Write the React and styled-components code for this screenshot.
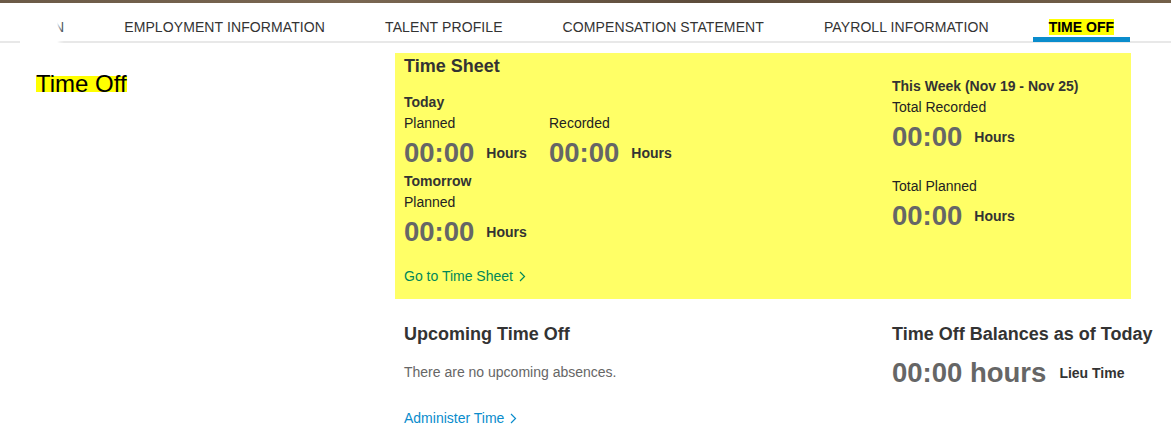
import React from 'react';
import styled, { createGlobalStyle } from 'styled-components';

const GlobalStyle = createGlobalStyle`
  html, body {
    margin: 0;
    padding: 0;
    background: #fff;
    font-family: "Liberation Sans", Arial, sans-serif;
    color: #333;
  }
`;

const HeaderStrip = styled.div`
  height: 3px;
  background: linear-gradient(to right, #6b5a47, #7a6752 30%, #5d4c3b 60%, #736049);
`;

const NavWrap = styled.nav`
  position: relative;
  height: 40px;
`;

const NavScroller = styled.div`
  height: 40px;
  overflow: hidden;
  box-shadow: inset 0 -2px 0 #e8e8e8;
`;

const TabList = styled.ul`
  display: flex;
  justify-content: flex-end;
  gap: 28px;
  width: 1130px;
  margin: 0;
  padding: 0;
  list-style: none;
  white-space: nowrap;
`;

const Tab = styled.li`
  flex: none;
  box-sizing: border-box;
  height: 39px;
  padding: 15px 16px 0;
  font-size: 14px;
  line-height: 19px;
  letter-spacing: ${p => (p.$active ? 0 : 0.1)}px;
  color: ${p => (p.$active ? '#000' : '#333')};
  font-weight: ${p => (p.$active ? 700 : 400)};
  border-bottom: 5px solid ${p => (p.$active ? '#0a8ccc' : 'transparent')};
`;

const Mark = styled.span`
  background: #ffff00;
  line-height: 16px;
  display: inline-block;
`;

/* white fade that hides the tabs scrolled off to the left */
const ScrollFade = styled.div`
  position: absolute;
  top: 0;
  left: 0;
  width: 64px;
  height: 40px;
  background:
    linear-gradient(#e8e8e8, #e8e8e8) left bottom / 20px 2px no-repeat,
    linear-gradient(to right, #fff 0, #fff 57px, rgba(255, 255, 255, 0.45) 60px, rgba(255, 255, 255, 0) 64px);
`;

const Page = styled.div`
  display: grid;
  grid-template-columns: 395px 736px;
`;

const Side = styled.div`
  padding: 27px 0 0 36px;
`;

const PageTitle = styled.h1`
  margin: 0;
  font-size: 24px;
  font-weight: 400;
  line-height: 28px;
  color: #000;
`;

const Main = styled.div`
  padding-top: 10px;
`;

const Card = styled.section`
  display: grid;
  grid-template-columns: 488px 1fr;
  padding: 0 9px 12px;
  background: #ffff66;
  white-space: nowrap;
`;

const Column = styled.div`
  padding-top: ${p => p.$top || 0}px;
`;

const CardTitle = styled.h2`
  margin: 0 0 13px;
  font-size: 18px;
  font-weight: 700;
  line-height: 26px;
  color: #333;
`;

const DayLabel = styled.div`
  font-size: 14px;
  font-weight: 700;
  line-height: 21px;
  color: #333;
`;

const Stats = styled.div`
  display: grid;
  grid-template-columns: 145px 145px;
`;

const Label = styled.div`
  font-size: 14px;
  line-height: 21px;
  color: #222;
  margin-top: ${p => p.$gap || 0}px;
`;

const ValueRow = styled.div`
  display: flex;
  align-items: center;
  gap: ${p => p.$gap || 12}px;
  height: 37px;
  margin-top: ${p => p.$top || 0}px;
`;

const Value = styled.span`
  font-size: 27.5px;
  font-weight: 700;
  color: #666;
`;

const Unit = styled.span`
  font-size: 14px;
  font-weight: 700;
  color: #333;
`;

const Link = styled.a`
  display: inline-flex;
  align-items: center;
  gap: 6px;
  margin-top: ${p => p.$gap || 0}px;
  font-size: 14px;
  line-height: 21px;
  color: ${p => p.$color};
  text-decoration: none;
`;

const Lower = styled.div`
  display: grid;
  grid-template-columns: 488px 1fr;
  padding: 22px 9px 0;
  white-space: nowrap;
`;

const SectionTitle = styled.h3`
  margin: 0;
  font-size: 18px;
  font-weight: 700;
  line-height: 26px;
  color: #333;
`;

const Muted = styled.p`
  margin: 15px 0 0;
  font-size: 14px;
  line-height: 21px;
  color: #666;
`;

const Chevron = ({ color }) => (
  <svg width="7" height="11" viewBox="0 0 7 11">
    <polyline points="1,1 5.5,5.5 1,10" fill="none" stroke={color} strokeWidth="1.2" />
  </svg>
);

const Stat = ({ label, value, gapTop }) => (
  <div>
    <Label $gap={gapTop}>{label}</Label>
    <ValueRow>
      <Value>{value}</Value>
      <Unit>Hours</Unit>
    </ValueRow>
  </div>
);

const tabs = ['PERSONAL INFORMATION', 'EMPLOYMENT INFORMATION', 'TALENT PROFILE', 'COMPENSATION STATEMENT', 'PAYROLL INFORMATION'];

export default function App() {
  return (
    <>
      <GlobalStyle />
      <HeaderStrip />
      <NavWrap>
        <NavScroller>
          <TabList>
            {tabs.map(t => (
              <Tab key={t}>{t}</Tab>
            ))}
            <Tab $active>
              <Mark>TIME OFF</Mark>
            </Tab>
          </TabList>
        </NavScroller>
        <ScrollFade />
      </NavWrap>
      <Page>
        <Side>
          <PageTitle>
            <Mark>Time Off</Mark>
          </PageTitle>
        </Side>
        <Main>
          <Card>
            <Column>
              <CardTitle>Time Sheet</CardTitle>
              <DayLabel>Today</DayLabel>
              <Stats>
                <Stat label="Planned" value="00:00" />
                <Stat label="Recorded" value="00:00" />
              </Stats>
              <DayLabel>Tomorrow</DayLabel>
              <Stat label="Planned" value="00:00" />
              <Link href="#" $color="#00875a" $gap={16}>
                Go to Time Sheet <Chevron color="#00875a" />
              </Link>
            </Column>
            <Column $top={23}>
              <DayLabel>This Week (Nov 19 - Nov 25)</DayLabel>
              <Stat label="Total Recorded" value="00:00" />
              <Stat label="Total Planned" value="00:00" gapTop={21} />
            </Column>
          </Card>
          <Lower>
            <div>
              <SectionTitle>Upcoming Time Off</SectionTitle>
              <Muted>There are no upcoming absences.</Muted>
              <Link href="#" $color="#0a8ccc" $gap={25}>
                Administer Time <Chevron color="#0a8ccc" />
              </Link>
            </div>
            <div>
              <SectionTitle>Time Off Balances as of Today</SectionTitle>
              <ValueRow $gap={13} $top={7}>
                <Value>00:00 hours</Value>
                <Unit>Lieu Time</Unit>
              </ValueRow>
            </div>
          </Lower>
        </Main>
      </Page>
    </>
  );
}
